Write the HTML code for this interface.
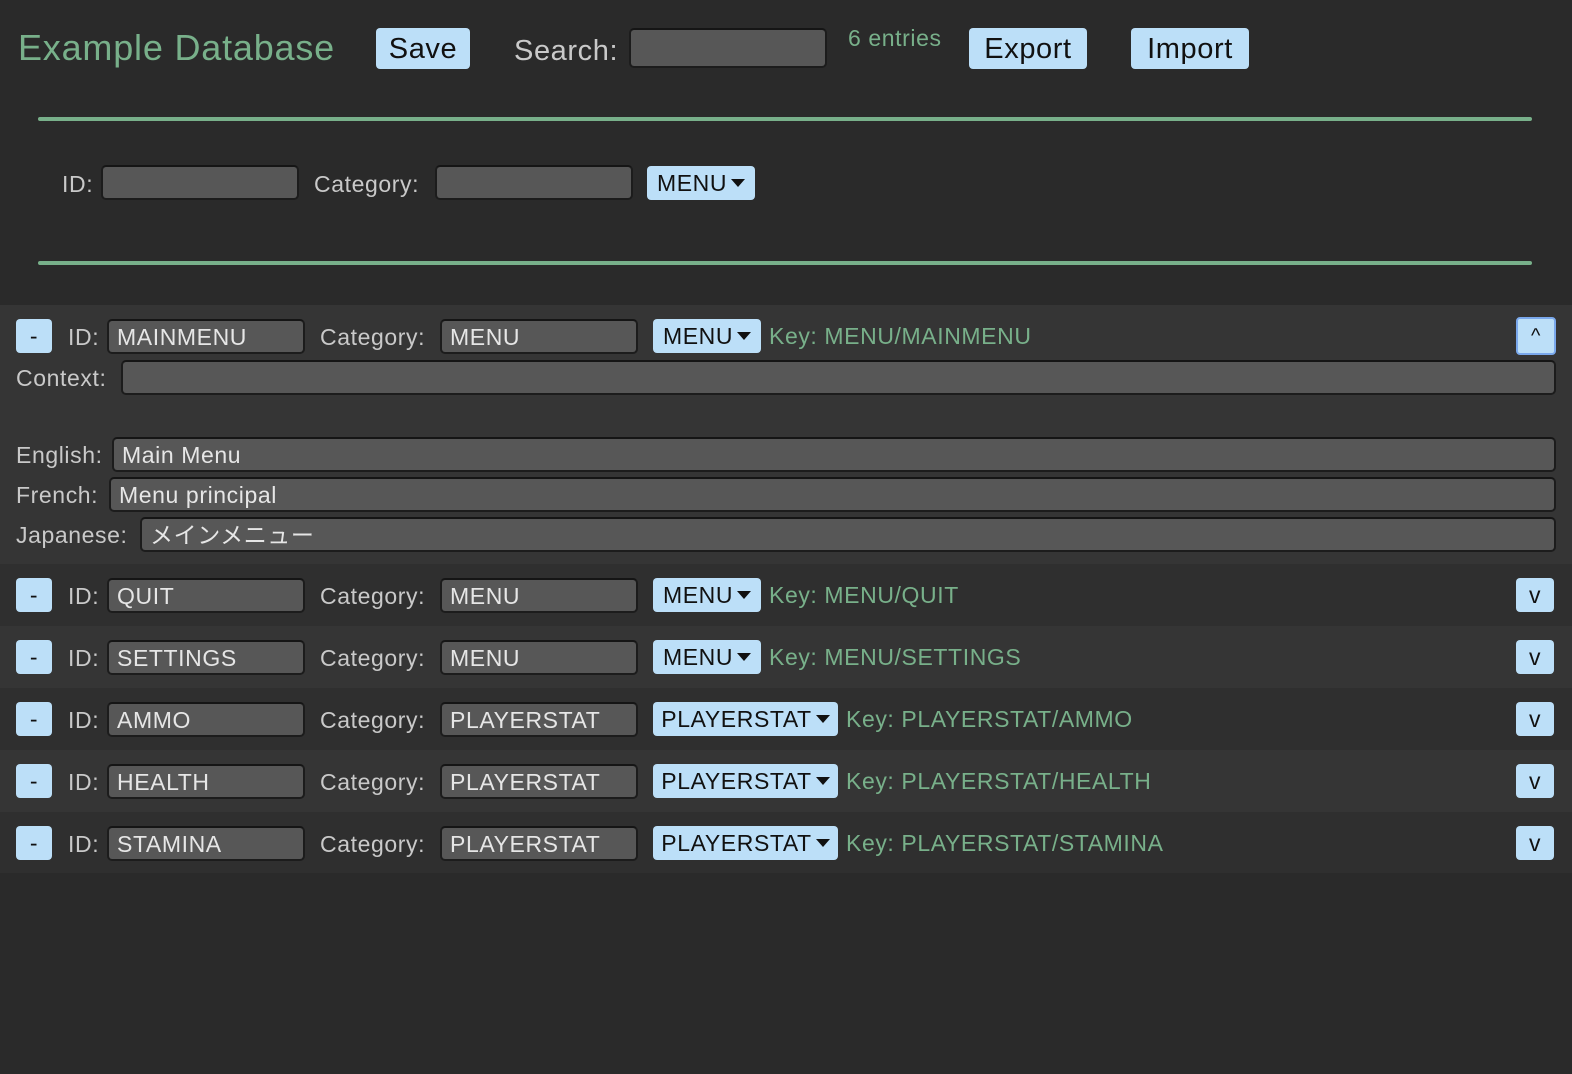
<!DOCTYPE html>
<html><head><meta charset="utf-8"><style>
*{margin:0;padding:0;box-sizing:border-box}
body{width:1572px;height:1074px;background:#2a2a2a;position:relative;overflow:hidden;font-family:"Liberation Sans","Noto Sans CJK JP",sans-serif;color:#c9c9c9;letter-spacing:0.6px}
.a{position:absolute;white-space:nowrap}
.lbl{font-size:23px;line-height:36px;color:#c9c9c9}
.in{background:#575757;border:2px solid #1c1c1c;border-top-color:#151515;border-radius:5px;font-size:23px;line-height:33px;color:#e6e6e6;padding-left:8px}
.btn{background:#bcdff8;border-radius:4px;color:#111;text-align:center;font-size:23px;line-height:35px}
.grn{color:#78b08a}
.row{position:absolute;left:0;width:1572px}
.tri{display:inline-block;width:0;height:0;border-left:7px solid transparent;border-right:7px solid transparent;border-top:8px solid #111;vertical-align:middle;margin-left:4px;margin-top:-4px}
.line{position:absolute;left:38px;width:1494px;height:4px;background:#78b08a;border-radius:2px}
</style></head><body>
<div class="a grn" style="left:18px;top:24px;font-size:36px;line-height:48px;letter-spacing:0.8px">Example Database</div>
<div class="a btn" style="left:376px;top:28px;width:94px;height:41px;font-size:29px;line-height:42px">Save</div>
<div class="a lbl" style="left:514px;top:30px;font-size:29px;line-height:42px">Search:</div>
<div class="a in" style="left:629px;top:28px;width:198px;height:40px"></div>
<div class="a grn" style="left:848px;top:22px;font-size:23px;line-height:32px">6 entries</div>
<div class="a btn" style="left:969px;top:28px;width:118px;height:41px;font-size:29px;line-height:42px">Export</div>
<div class="a btn" style="left:1131px;top:28px;width:118px;height:41px;font-size:29px;line-height:42px">Import</div>
<div class="line" style="top:117px"></div>
<div class="a lbl" style="left:62px;top:166px">ID:</div>
<div class="a in" style="left:101px;top:165px;width:198px;height:35px"></div>
<div class="a lbl" style="left:314px;top:166px">Category:</div>
<div class="a in" style="left:435px;top:165px;width:198px;height:35px"></div>
<div class="a btn" style="left:647px;top:166px;width:108px;height:34px">MENU<span class="tri"></span></div>
<div class="line" style="top:261px"></div>

<div class="row" style="top:305px;height:259px;background:#353535">
<div class="a btn" style="left:16px;top:14px;width:36px;height:34px">-</div>
<div class="a lbl" style="left:68px;top:14px">ID:</div>
<div class="a in" style="left:107px;top:14px;width:198px;height:35px">MAINMENU</div>
<div class="a lbl" style="left:320px;top:14px">Category:</div>
<div class="a in" style="left:440px;top:14px;width:198px;height:35px">MENU</div>
<div class="a btn" style="left:653px;top:14px;width:108px;height:34px">MENU<span class="tri"></span></div>
<div class="a lbl grn" style="left:769px;top:13px">Key: MENU/MAINMENU</div>
<div class="a btn" style="left:1516px;top:12px;width:40px;height:38px;border:2px solid #7aa8ec;line-height:34px;font-size:20px">^</div>
<div class="a lbl" style="left:16px;top:55px">Context:</div>
<div class="a in" style="left:121px;top:55px;width:1435px;height:35px"></div>
<div class="a lbl" style="left:16px;top:132px">English:</div>
<div class="a in" style="left:112px;top:132px;width:1444px;height:35px">Main Menu</div>
<div class="a lbl" style="left:16px;top:172px">French:</div>
<div class="a in" style="left:109px;top:172px;width:1447px;height:35px">Menu principal</div>
<div class="a lbl" style="left:16px;top:212px">Japanese:</div>
<div class="a in" style="left:140px;top:212px;width:1416px;height:35px">メインメニュー</div>
</div>

<div class="row" style="top:564px;height:62px;background:#2f2f2f">
<div class="a btn" style="left:16px;top:14px;width:36px;height:34px">-</div>
<div class="a lbl" style="left:68px;top:14px">ID:</div>
<div class="a in" style="left:107px;top:14px;width:198px;height:35px">QUIT</div>
<div class="a lbl" style="left:320px;top:14px">Category:</div>
<div class="a in" style="left:440px;top:14px;width:198px;height:35px">MENU</div>
<div class="a btn" style="left:653px;top:14px;width:108px;height:34px">MENU<span class="tri"></span></div>
<div class="a lbl grn" style="left:769px;top:13px">Key: MENU/QUIT</div>
<div class="a btn" style="left:1516px;top:14px;width:38px;height:34px">v</div>
</div>

<div class="row" style="top:626px;height:62px;background:#353535">
<div class="a btn" style="left:16px;top:14px;width:36px;height:34px">-</div>
<div class="a lbl" style="left:68px;top:14px">ID:</div>
<div class="a in" style="left:107px;top:14px;width:198px;height:35px">SETTINGS</div>
<div class="a lbl" style="left:320px;top:14px">Category:</div>
<div class="a in" style="left:440px;top:14px;width:198px;height:35px">MENU</div>
<div class="a btn" style="left:653px;top:14px;width:108px;height:34px">MENU<span class="tri"></span></div>
<div class="a lbl grn" style="left:769px;top:13px">Key: MENU/SETTINGS</div>
<div class="a btn" style="left:1516px;top:14px;width:38px;height:34px">v</div>
</div>

<div class="row" style="top:688px;height:62px;background:#2f2f2f">
<div class="a btn" style="left:16px;top:14px;width:36px;height:34px">-</div>
<div class="a lbl" style="left:68px;top:14px">ID:</div>
<div class="a in" style="left:107px;top:14px;width:198px;height:35px">AMMO</div>
<div class="a lbl" style="left:320px;top:14px">Category:</div>
<div class="a in" style="left:440px;top:14px;width:198px;height:35px">PLAYERSTAT</div>
<div class="a btn" style="left:653px;top:14px;width:185px;height:34px">PLAYERSTAT<span class="tri"></span></div>
<div class="a lbl grn" style="left:846px;top:13px">Key: PLAYERSTAT/AMMO</div>
<div class="a btn" style="left:1516px;top:14px;width:38px;height:34px">v</div>
</div>

<div class="row" style="top:750px;height:62px;background:#353535">
<div class="a btn" style="left:16px;top:14px;width:36px;height:34px">-</div>
<div class="a lbl" style="left:68px;top:14px">ID:</div>
<div class="a in" style="left:107px;top:14px;width:198px;height:35px">HEALTH</div>
<div class="a lbl" style="left:320px;top:14px">Category:</div>
<div class="a in" style="left:440px;top:14px;width:198px;height:35px">PLAYERSTAT</div>
<div class="a btn" style="left:653px;top:14px;width:185px;height:34px">PLAYERSTAT<span class="tri"></span></div>
<div class="a lbl grn" style="left:846px;top:13px">Key: PLAYERSTAT/HEALTH</div>
<div class="a btn" style="left:1516px;top:14px;width:38px;height:34px">v</div>
</div>

<div class="row" style="top:812px;height:61px;background:#2f2f2f">
<div class="a btn" style="left:16px;top:14px;width:36px;height:34px">-</div>
<div class="a lbl" style="left:68px;top:14px">ID:</div>
<div class="a in" style="left:107px;top:14px;width:198px;height:35px">STAMINA</div>
<div class="a lbl" style="left:320px;top:14px">Category:</div>
<div class="a in" style="left:440px;top:14px;width:198px;height:35px">PLAYERSTAT</div>
<div class="a btn" style="left:653px;top:14px;width:185px;height:34px">PLAYERSTAT<span class="tri"></span></div>
<div class="a lbl grn" style="left:846px;top:13px">Key: PLAYERSTAT/STAMINA</div>
<div class="a btn" style="left:1516px;top:14px;width:38px;height:34px">v</div>
</div>
</body></html>
